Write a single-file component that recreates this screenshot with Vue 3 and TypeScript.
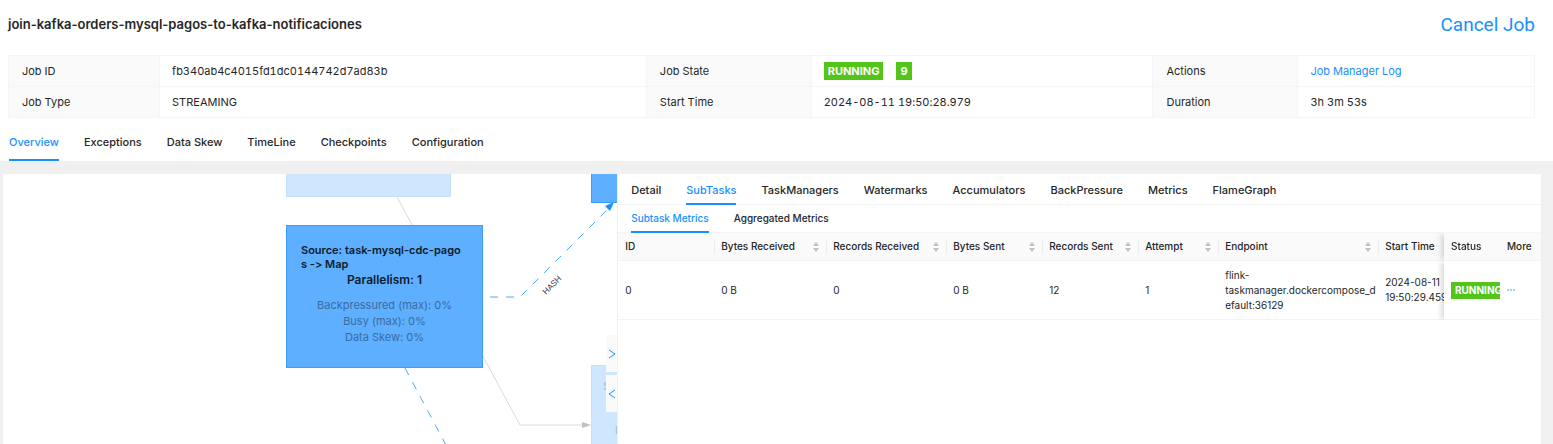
<script setup lang="ts">
import { ref } from 'vue'

interface Column {
  title: string
  width: number
  sortable?: boolean
}

const mainTabs: string[] = ['Overview', 'Exceptions', 'Data Skew', 'TimeLine', 'Checkpoints', 'Configuration']
const drawerTabs: string[] = ['Detail', 'SubTasks', 'TaskManagers', 'Watermarks', 'Accumulators', 'BackPressure', 'Metrics', 'FlameGraph']
const metricTabs: string[] = ['Subtask Metrics', 'Aggregated Metrics']

const activeMain = ref('Overview')
const activeDrawer = ref('SubTasks')
const activeMetric = ref('Subtask Metrics')

const columns: Column[] = [
  { title: 'ID', width: 96 },
  { title: 'Bytes Received', width: 112, sortable: true },
  { title: 'Records Received', width: 120, sortable: true },
  { title: 'Bytes Sent', width: 96, sortable: true },
  { title: 'Records Sent', width: 96, sortable: true },
  { title: 'Attempt', width: 80, sortable: true },
  { title: 'Endpoint', width: 160, sortable: true },
  { title: 'Start Time', width: 96 },
]

const subtasks: string[][] = [
  ['0', '0 B', '0', '0 B', '12', '1', 'flink-taskmanager.dockercompose_default:36129', '2024-08-11 19:50:29.459'],
]
</script>

<template>
  <div class="page">
    <header class="job">
      <div class="title-row">
        <h1>join-kafka-orders-mysql-pagos-to-kafka-notificaciones</h1>
        <button class="cancel" type="button">Cancel Job</button>
      </div>

      <table class="info">
        <colgroup>
          <col class="c1" /><col class="c2" /><col class="c3" /><col class="c4" /><col class="c5" /><col class="c6" />
        </colgroup>
        <tbody>
          <tr>
            <th scope="row">Job ID</th>
            <td>fb340ab4c4015fd1dc0144742d7ad83b</td>
            <th scope="row">Job State</th>
            <td>
              <div class="state"><span class="badge">RUNNING</span><i class="divider"></i><span class="badge">9</span></div>
            </td>
            <th scope="row">Actions</th>
            <td><a href="#job-manager-log">Job Manager Log</a></td>
          </tr>
          <tr>
            <th scope="row">Job Type</th>
            <td>STREAMING</td>
            <th scope="row">Start Time</th>
            <td>2024-08-11 19:50:28.979</td>
            <th scope="row">Duration</th>
            <td>3h 3m 53s</td>
          </tr>
        </tbody>
      </table>

      <nav class="tabs main-tabs">
        <button
          v-for="tab in mainTabs"
          :key="tab"
          type="button"
          :class="{ active: tab === activeMain }"
          @click="activeMain = tab"
        >{{ tab }}</button>
      </nav>
    </header>

    <main class="overview">
      <section class="graph">
        <svg class="edges" aria-hidden="true">
          <g class="edge-muted">
            <path d="M394 23 L517 251 H580" />
            <path class="tip" d="M579 248 L588 251 L579 254 Z" />
          </g>
          <g class="edge-active">
            <path d="M487 123 H517 L606 34" />
            <path d="M402 194 L444 273" />
            <path class="tip" d="M611 28 L607 37 L602 32 Z" />
          </g>
          <text class="edge-label" transform="translate(543 121) rotate(-45)">HASH</text>
        </svg>

        <div class="node muted node-top"></div>
        <div class="node node-join"></div>
        <div class="node node-source">
          <p class="name">Source: task-mysql-cdc-pagos -&gt; Map</p>
          <p class="parallelism">Parallelism: 1</p>
          <ul>
            <li>Backpressured (max): 0%</li>
            <li>Busy (max): 0%</li>
            <li>Data Skew: 0%</li>
          </ul>
        </div>
        <div class="node muted node-sink">
          <span class="sink-name">S</span>
          <span class="sink-stat">B</span>
        </div>

        <div class="handles">
          <button type="button" aria-label="Collapse panel">
            <svg viewBox="0 0 8 10" width="8" height="10"><path d="M1 1 L7 5 L1 9" /></svg>
          </button>
          <button type="button" aria-label="Expand panel">
            <svg viewBox="0 0 8 10" width="8" height="10"><path d="M7 1 L1 5 L7 9" /></svg>
          </button>
        </div>
      </section>

      <section class="drawer">
        <nav class="tabs drawer-tabs">
          <button
            v-for="tab in drawerTabs"
            :key="tab"
            type="button"
            :class="{ active: tab === activeDrawer }"
            @click="activeDrawer = tab"
          >{{ tab }}</button>
        </nav>
        <nav class="tabs metric-tabs">
          <button
            v-for="tab in metricTabs"
            :key="tab"
            type="button"
            :class="{ active: tab === activeMetric }"
            @click="activeMetric = tab"
          >{{ tab }}</button>
        </nav>

        <div class="scroller">
          <table class="subtasks">
            <colgroup>
              <col v-for="c in columns" :key="c.title" :style="{ width: c.width + 'px' }" />
              <col class="status-col" />
              <col class="more-col" />
            </colgroup>
            <thead>
              <tr>
                <th v-for="c in columns" :key="c.title" scope="col" class="split">
                  <div class="head">
                    <span>{{ c.title }}</span>
                    <svg v-if="c.sortable" viewBox="0 0 6 10" width="6" height="10">
                      <path d="M0 4 L3 0 L6 4 Z M0 6 L3 10 L6 6 Z" />
                    </svg>
                  </div>
                </th>
                <th scope="col" class="fixed status">Status</th>
                <th scope="col" class="fixed more">More</th>
              </tr>
            </thead>
            <tbody>
              <tr v-for="row in subtasks" :key="row[0]">
                <td v-for="(cell, i) in row" :key="i">{{ cell }}</td>
                <td class="fixed status"><div class="clip"><span class="badge">RUNNING</span></div></td>
                <td class="fixed more">
                  <button type="button" class="dots" aria-label="More">
                    <svg viewBox="0 0 9 2" width="9" height="2"><path d="M0 0h2v2H0zM3 0h2v2H3zM6 0h2v2H6z" /></svg>
                  </button>
                </td>
              </tr>
            </tbody>
          </table>
        </div>
      </section>
    </main>
  </div>
</template>

<style>
body {
  margin: 0;
}
</style>

<style scoped>
.page {
  box-sizing: border-box;
  display: flex;
  flex-direction: column;
  height: 100vh;
  overflow: hidden;
  background: #f0f0f0;
  color: #262626;
  font: 11px/17px Inter, 'Liberation Sans', sans-serif;
  font-variant-ligatures: none;
}
.page * {
  box-sizing: border-box;
}
button {
  padding: 0;
  border: 0;
  background: none;
  color: inherit;
  font: inherit;
  cursor: pointer;
}
a {
  color: #1890ff;
  text-decoration: none;
}
table {
  border-spacing: 0;
  table-layout: fixed;
}
th,
td {
  text-align: left;
}

.job {
  padding: 0 18px 0 8px;
  background: #fff;
}
.title-row {
  display: flex;
  align-items: center;
  justify-content: space-between;
  height: 55px;
  padding-bottom: 6px;
}
h1 {
  margin: 0;
  font-size: 13px;
  font-weight: 600;
}
.cancel {
  color: #1890ff;
  font-family: Roboto, 'Liberation Sans', sans-serif;
  font-size: 19px;
  line-height: 24px;
}

.info {
  width: 100%;
  border: 1px solid #f5f5f5;
  border-width: 1px 0 0 1px;
  font-variant-numeric: tabular-nums;
}
.info th,
.info td {
  height: 31px;
  padding: 0 12px;
  border: 1px solid #f5f5f5;
  border-width: 0 1px 1px 0;
  font-weight: 400;
}
.info th {
  padding-left: 13px;
  background: #fafafa;
}
.c1 { width: 9.9%; }
.c2 { width: 31.9%; }
.c3 { width: 10.8%; }
.c4 { width: 22.4%; }
.c5 { width: 9.5%; }
.c6 { width: 15.5%; }
.state {
  display: flex;
  align-items: center;
}
.divider {
  width: 1px;
  height: 10px;
  margin: 0 6px;
  background: #f5f5f5;
}
.badge {
  display: inline-block;
  padding: 0 4px;
  background: #52c41a;
  color: #fff;
  font-weight: 700;
  line-height: 18px;
  white-space: nowrap;
}

.tabs {
  display: flex;
  gap: 25px;
}
.tabs button {
  border-bottom: 2px solid transparent;
  font-weight: 500;
  white-space: nowrap;
}
.tabs .active {
  border-color: #1890ff;
  color: #1890ff;
}
.main-tabs {
  height: 43px;
  padding-left: 1px;
}
.main-tabs button {
  padding-top: 8px;
}

.overview {
  display: flex;
  flex: 1;
  min-height: 0;
  margin: 13px 12px 0 3px;
  background: #fff;
}
.graph {
  position: relative;
  width: 40%;
  overflow: hidden;
  border-right: 1px solid #f0f0f0;
}
.drawer {
  width: 60%;
}

.edges {
  position: absolute;
  inset: 0;
  width: 100%;
  height: 100%;
}
.edges path {
  fill: none;
}
.edge-muted path {
  stroke: #d9d9d9;
}
.edge-muted .tip {
  fill: #bfbfbf;
  stroke: none;
}
.edge-active path {
  stroke: #4da8ff;
  stroke-dasharray: 8 8;
}
.edge-active .tip {
  fill: #1890ff;
  stroke: none;
}
.edge-label {
  fill: #333;
  font-size: 8px;
}

.node {
  position: absolute;
  border: 1px solid #3c9ef8;
  background: #5eafff;
}
.node.muted {
  border-color: #c6e1fc;
  background: #cfe6ff;
}
.node-top {
  left: 283px;
  top: -120px;
  width: 165px;
  height: 143px;
}
.node-join {
  left: 588px;
  top: -114px;
  width: 197px;
  height: 143px;
}
.node-source {
  left: 283px;
  top: 51px;
  width: 197px;
  height: 143px;
  padding: 17px 14px 0;
  color: #0c1c2c;
}
.node-sink {
  left: 588px;
  top: 191px;
  width: 197px;
  height: 143px;
  color: #a9bccf;
}
.sink-name,
.sink-stat {
  position: absolute;
  font-weight: 500;
}
.sink-name {
  left: 11px;
  top: 12px;
}
.sink-stat {
  left: 23px;
  top: 56px;
}
.node p,
.node ul {
  margin: 0;
  padding: 0;
  list-style: none;
}
.node .name {
  padding-right: 2px;
  font-weight: 600;
  line-height: 14px;
  word-break: break-all;
}
.parallelism {
  font-size: 12px;
  font-weight: 600;
  line-height: 18px;
  text-align: center;
}
.node ul {
  padding-top: 8px;
  color: #3a6c9f;
  line-height: 16px;
  text-align: center;
}

.handles {
  position: absolute;
  top: 161px;
  right: 0;
  display: flex;
  flex-direction: column;
  gap: 3px;
}
.handles button {
  display: flex;
  align-items: center;
  justify-content: center;
  width: 11px;
  height: 37px;
  background: #fafafa;
}
.handles path {
  fill: none;
  stroke: #1890ff;
}

.drawer .tabs {
  padding-left: 13px;
  border-bottom: 1px solid #f5f5f5;
}
.drawer .tabs button {
  margin-bottom: -1px;
}
.drawer-tabs {
  height: 31px;
}
.drawer-tabs button {
  padding-top: 4px;
}
.metric-tabs {
  height: 28px;
  font-size: 10px;
}

.scroller {
  overflow-x: auto;
  scrollbar-width: none;
}
.subtasks {
  width: 100%;
  font-size: 10px;
  line-height: 15px;
}
.status-col { width: 56px; }
.more-col { width: 41px; }
.subtasks th,
.subtasks td {
  padding: 0 7px;
  border-bottom: 1px solid #f3f3f3;
}
.subtasks th {
  position: relative;
  height: 28px;
  background: #fafafa;
  font-weight: 500;
  white-space: nowrap;
}
.subtasks td {
  height: 59px;
  padding-right: 0;
  background: #fff;
  overflow-wrap: anywhere;
}
.head {
  display: flex;
  align-items: center;
  justify-content: space-between;
}
.head svg {
  fill: #bfbfbf;
}
.split + .split::before {
  content: '';
  position: absolute;
  left: 0;
  top: 6px;
  bottom: 6px;
  width: 1px;
  background: #ededed;
}
.subtasks .fixed {
  position: sticky;
  z-index: 1;
}
.subtasks .status {
  right: 41px;
  padding-right: 0;
  box-shadow: -4px 0 5px -1px rgba(0, 0, 0, 0.14);
  clip-path: inset(0 0 0 -12px);
}
.subtasks .more {
  right: 0;
}
.clip {
  display: flex;
  overflow: hidden;
}
.clip .badge {
  line-height: 17px;
}
.dots {
  display: flex;
}
.dots svg {
  fill: #9fcdf8;
}
</style>
